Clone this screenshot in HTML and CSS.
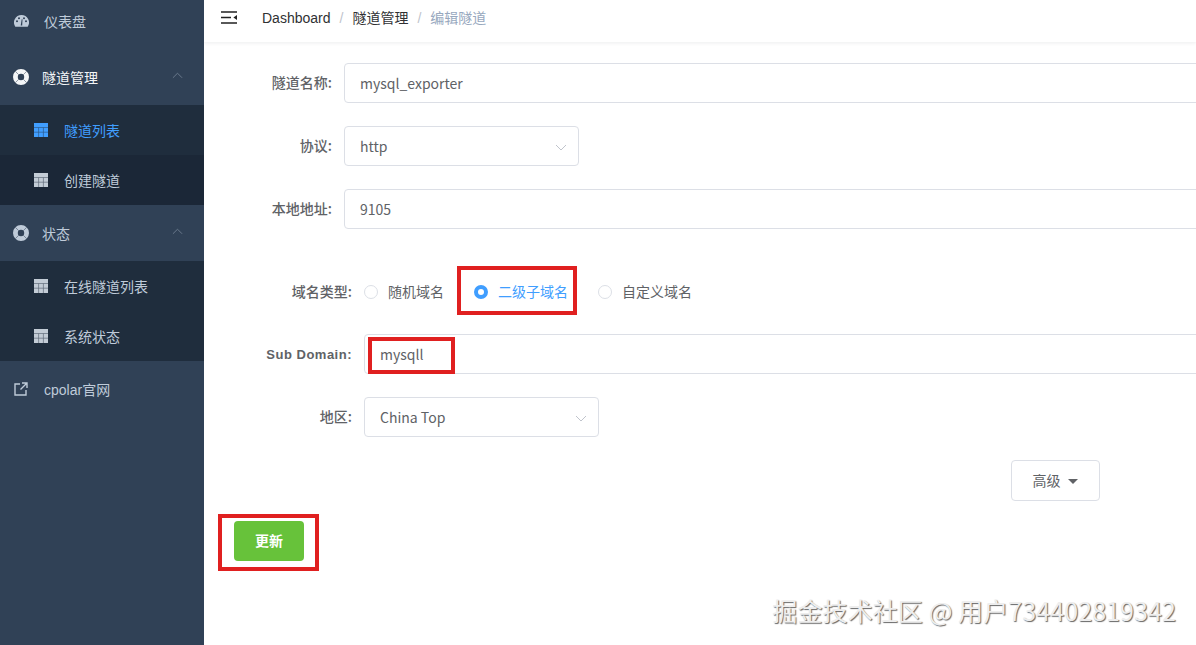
FILE: index.html
```html
<!DOCTYPE html>
<html lang="zh">
<head>
<meta charset="utf-8">
<title>编辑隧道</title>
<link rel="stylesheet" href="styles.css">
</head>
<body>
<svg class="defs" width="0" height="0">
  <symbol id="i-table" viewBox="0 0 14 14">
    <rect width="14" height="14" fill="currentColor"/>
    <path d="M0 4.5h14M0 9.2h14M4.6 4.5V14M9.4 4.5V14" stroke="#1f2d3d" stroke-width=".7" opacity=".6"/>
  </symbol>
  <symbol id="i-buoy" viewBox="0 0 16 16">
    <path d="M8 0a8 8 0 1 0 0 16A8 8 0 0 0 8 0zm0 4.8a3.2 3.2 0 1 1 0 6.4 3.2 3.2 0 0 1 0-6.4z" fill="currentColor" fill-rule="evenodd"/>
    <path d="M2.2 2.2 5.7 5.7M13.8 2.2 10.3 5.7M2.2 13.8 5.7 10.3M13.8 13.8 10.3 10.3" stroke="#304156" stroke-width="1" opacity=".5"/>
  </symbol>
  <symbol id="i-chevron" viewBox="0 0 12 7">
    <path d="M1 6 6 1l5 5" fill="none" stroke="currentColor" stroke-width="1"/>
  </symbol>
</svg>
<div class="app">
  <aside class="sidebar">
    <a class="item item-first">
      <svg class="ico-dash" viewBox="0 0 15 12"><path d="M7.5 0A7.5 7.5 0 0 0 1.3 11.7h12.4A7.5 7.5 0 0 0 7.5 0zM3 7.2a1 1 0 1 1 0-2 1 1 0 0 1 0 2zm2-3a1 1 0 1 1 0-2 1 1 0 0 1 0 2zm1.7 6.2 1-6.2h.8l-.3 6.2zm3.3-6.2a1 1 0 1 1 0-2 1 1 0 0 1 0 2zm2 3a1 1 0 1 1 0-2 1 1 0 0 1 0 2z" fill="currentColor" fill-rule="evenodd"/></svg>
      <span>仪表盘</span>
    </a>
    <div class="group-head">
      <svg class="ico-buoy is-bright"><use href="#i-buoy"/></svg>
      <span class="bright">隧道管理</span>
      <svg class="chev"><use href="#i-chevron"/></svg>
    </div>
    <div class="sub">
      <a class="sub-item is-active"><svg class="ico-table"><use href="#i-table"/></svg><span>隧道列表</span></a>
      <a class="sub-item is-dim"><svg class="ico-table"><use href="#i-table"/></svg><span>创建隧道</span></a>
    </div>
    <div class="group-head">
      <svg class="ico-buoy"><use href="#i-buoy"/></svg>
      <span>状态</span>
      <svg class="chev"><use href="#i-chevron"/></svg>
    </div>
    <div class="sub">
      <a class="sub-item"><svg class="ico-table"><use href="#i-table"/></svg><span>在线隧道列表</span></a>
      <a class="sub-item"><svg class="ico-table"><use href="#i-table"/></svg><span>系统状态</span></a>
    </div>
    <a class="item item-link">
      <svg class="ico-link" viewBox="0 0 14 14"><path d="M6 2H1v11h11V8M8 1h5v5M13 1 6.5 7.5" fill="none" stroke="currentColor" stroke-width="1.4"/></svg>
      <span>cpolar官网</span>
    </a>
  </aside>
  <main class="main">
    <header class="navbar">
      <svg class="hamburger" viewBox="0 0 16 13"><path d="M0 1h16M0 6.5h10M0 12h16" stroke="#222" stroke-width="1.6"/><path d="M16 4v5l-3.6-2.5z" fill="#222"/></svg>
      <nav class="crumbs">
        <span>Dashboard</span><i>/</i><span>隧道管理</span><i>/</i><span class="crumb-last">编辑隧道</span>
      </nav>
    </header>
    <form class="form">
      <div class="row row-top">
        <label class="label">隧道名称:</label>
        <div class="input input-wide">mysql_exporter</div>
      </div>
      <div class="row">
        <label class="label">协议:</label>
        <div class="input select">http<svg class="chev-down"><use href="#i-chevron"/></svg></div>
      </div>
      <div class="row">
        <label class="label">本地地址:</label>
        <div class="input input-wide">9105</div>
      </div>
      <div class="row row-radio indent">
        <label class="label">域名类型:</label>
        <div class="radios">
          <span class="radio"><b class="dot"></b>随机域名</span>
          <span class="radio is-on"><b class="dot"></b>二级子域名</span>
          <span class="radio"><b class="dot"></b>自定义域名</span>
        </div>
      </div>
      <div class="row indent row-sub">
        <label class="label label-latin">Sub Domain:</label>
        <div class="input input-wide">mysqll</div>
      </div>
      <div class="row indent">
        <label class="label">地区:</label>
        <div class="input select">China Top<svg class="chev-down"><use href="#i-chevron"/></svg></div>
      </div>
      <div class="row-adv"><button type="button" class="btn-adv">高级<b class="caret"></b></button></div>
      <button type="button" class="btn-save">更新</button>
    </form>
    <div class="mark mark-radio"></div>
    <div class="mark mark-sub"></div>
    <div class="mark mark-save"></div>
    <div class="watermark">掘金技术社区 @ 用户734402819342</div>
  </main>
</div>
</body>
</html>
```
FILE: styles.css
```css
* { box-sizing: border-box; }
html, body { margin: 0; height: 100%; overflow: hidden; }
body { font-family: "Liberation Sans", "Noto Sans CJK SC", sans-serif; font-size: 14px; color: #606266; background: #fff; }
.defs { position: absolute; }
.app { display: flex; height: 645px; }

.sidebar { width: 204px; flex: none; background: #304156; color: #bfcbd9; }
.item, .group-head { display: flex; align-items: center; height: 56px; padding-left: 14px; }
.item-first { height: 49px; padding-bottom: 8px; }
.item span { margin-left: 15px; }
.item-link span { margin-left: 16px; }
.group-head { position: relative; height: 56px; padding-left: 13px; }
.group-head span { margin-left: 13px; }
.bright { color: #f4f6f8; }
.is-bright { color: #f4f6f8; }
.ico-dash { width: 15px; height: 12px; }
.ico-link { width: 14px; height: 14px; }
.ico-buoy { width: 16px; height: 16px; }
.chev { position: absolute; right: 21px; top: 23px; width: 11px; height: 7px; color: #6f7e90; }
.sub { background: #1f2d3d; }
.sub-item { display: flex; align-items: center; height: 50px; padding-left: 34px; }
.sub-item span { margin-left: 16px; }
.ico-table { width: 14px; height: 14px; color: #c3ccd6; }
.is-active { color: #409eff; }
.is-active .ico-table { color: #409eff; }
.is-dim { background: #1b2737; }

.main { position: relative; flex: 1; min-width: 0; overflow: hidden; }
.navbar { display: flex; align-items: center; height: 42px; padding: 0 0 8px 17px; box-shadow: 0 1px 4px rgba(0, 21, 41, .08); }
.hamburger { width: 16px; height: 13px; }
.crumbs { margin-left: 25px; color: #303133; display: flex; align-items: baseline; }
.crumbs i { font-style: normal; color: #c0c4cc; margin: 0 9px; }
.crumb-last { color: #97a8be; }

.form { display: flex; flex-direction: column; padding-top: 21px; padding-left: 14px; }
.row { display: flex; align-items: center; height: 40px; margin-bottom: 23px; }
.row-top { margin-top: 0; }
.label { width: 114px; margin-right: 12px; margin-bottom: 2px; flex: none; text-align: right; font-weight: 500; font-size: 14px; color: #606266; font-family: "Noto Sans CJK SC", sans-serif; }
.input { display: flex; align-items: center; height: 40px; padding-left: 15px; border: 1px solid #dcdfe6; border-radius: 4px; font-family: "Noto Sans CJK SC", sans-serif; color: #606266; background: #fff; position: relative; }
.input-wide { width: 1100px; flex: none; }
.select { width: 235px; }
.chev-down { position: absolute; right: 11px; top: 17px; width: 12px; height: 7px; color: #c0c4cc; transform: rotate(180deg); }

.indent .label { width: 134px; }
.row-radio { margin-top: 20px; margin-bottom: 22px; }
.radios { display: flex; align-items: center; margin-bottom: 2px; }
.radio { display: flex; align-items: center; margin-right: 30px; font-family: "Noto Sans CJK SC", sans-serif; font-size: 14px; color: #606266; }
.dot { width: 14px; height: 14px; border: 1px solid #dcdfe6; border-radius: 50%; margin: 2px 10px 0 0; background: #fff; }
.is-on { color: #409eff; }
.is-on .dot { border: 4.5px solid #409eff; }
.indent .label-latin { font-family: "Liberation Sans", sans-serif; font-weight: 700; font-size: 13px; letter-spacing: .5px; margin-bottom: 0; }

.row-adv { display: flex; margin-top: 0; padding-left: 793px; }
.btn-adv { width: 89px; height: 41px; padding: 0 1px 2px 0; border: 1px solid #dcdfe6; border-radius: 4px; background: #fff; color: #606266; font: 14px "Noto Sans CJK SC", sans-serif; display: flex; align-items: center; justify-content: center; }
.caret { width: 0; height: 0; margin: 3px 0 0 7px; border: 5px solid transparent; border-top-color: #606266; border-bottom: 0; }
.btn-save { align-self: flex-start; width: 70px; height: 40px; margin: 20px 0 0 16px; padding: 0 0 2px; border: 0; border-radius: 4px; background: #67c23a; color: #fff; font: 700 14px "Noto Sans CJK SC", sans-serif; }

.mark { position: absolute; border: 4px solid #e02020; }
.mark-radio { left: 253px; top: 266px; width: 120px; height: 49px; }
.mark-sub { left: 164px; top: 337px; width: 87px; height: 37px; }
.mark-save { left: 14px; top: 514px; width: 101px; height: 57px; }

.watermark { position: absolute; right: 20px; top: 592px; font: 25px "Noto Sans CJK SC", sans-serif; letter-spacing: .1px; color: #eeeeee; text-shadow: 1px 1px 1px #666; white-space: nowrap; }
```
